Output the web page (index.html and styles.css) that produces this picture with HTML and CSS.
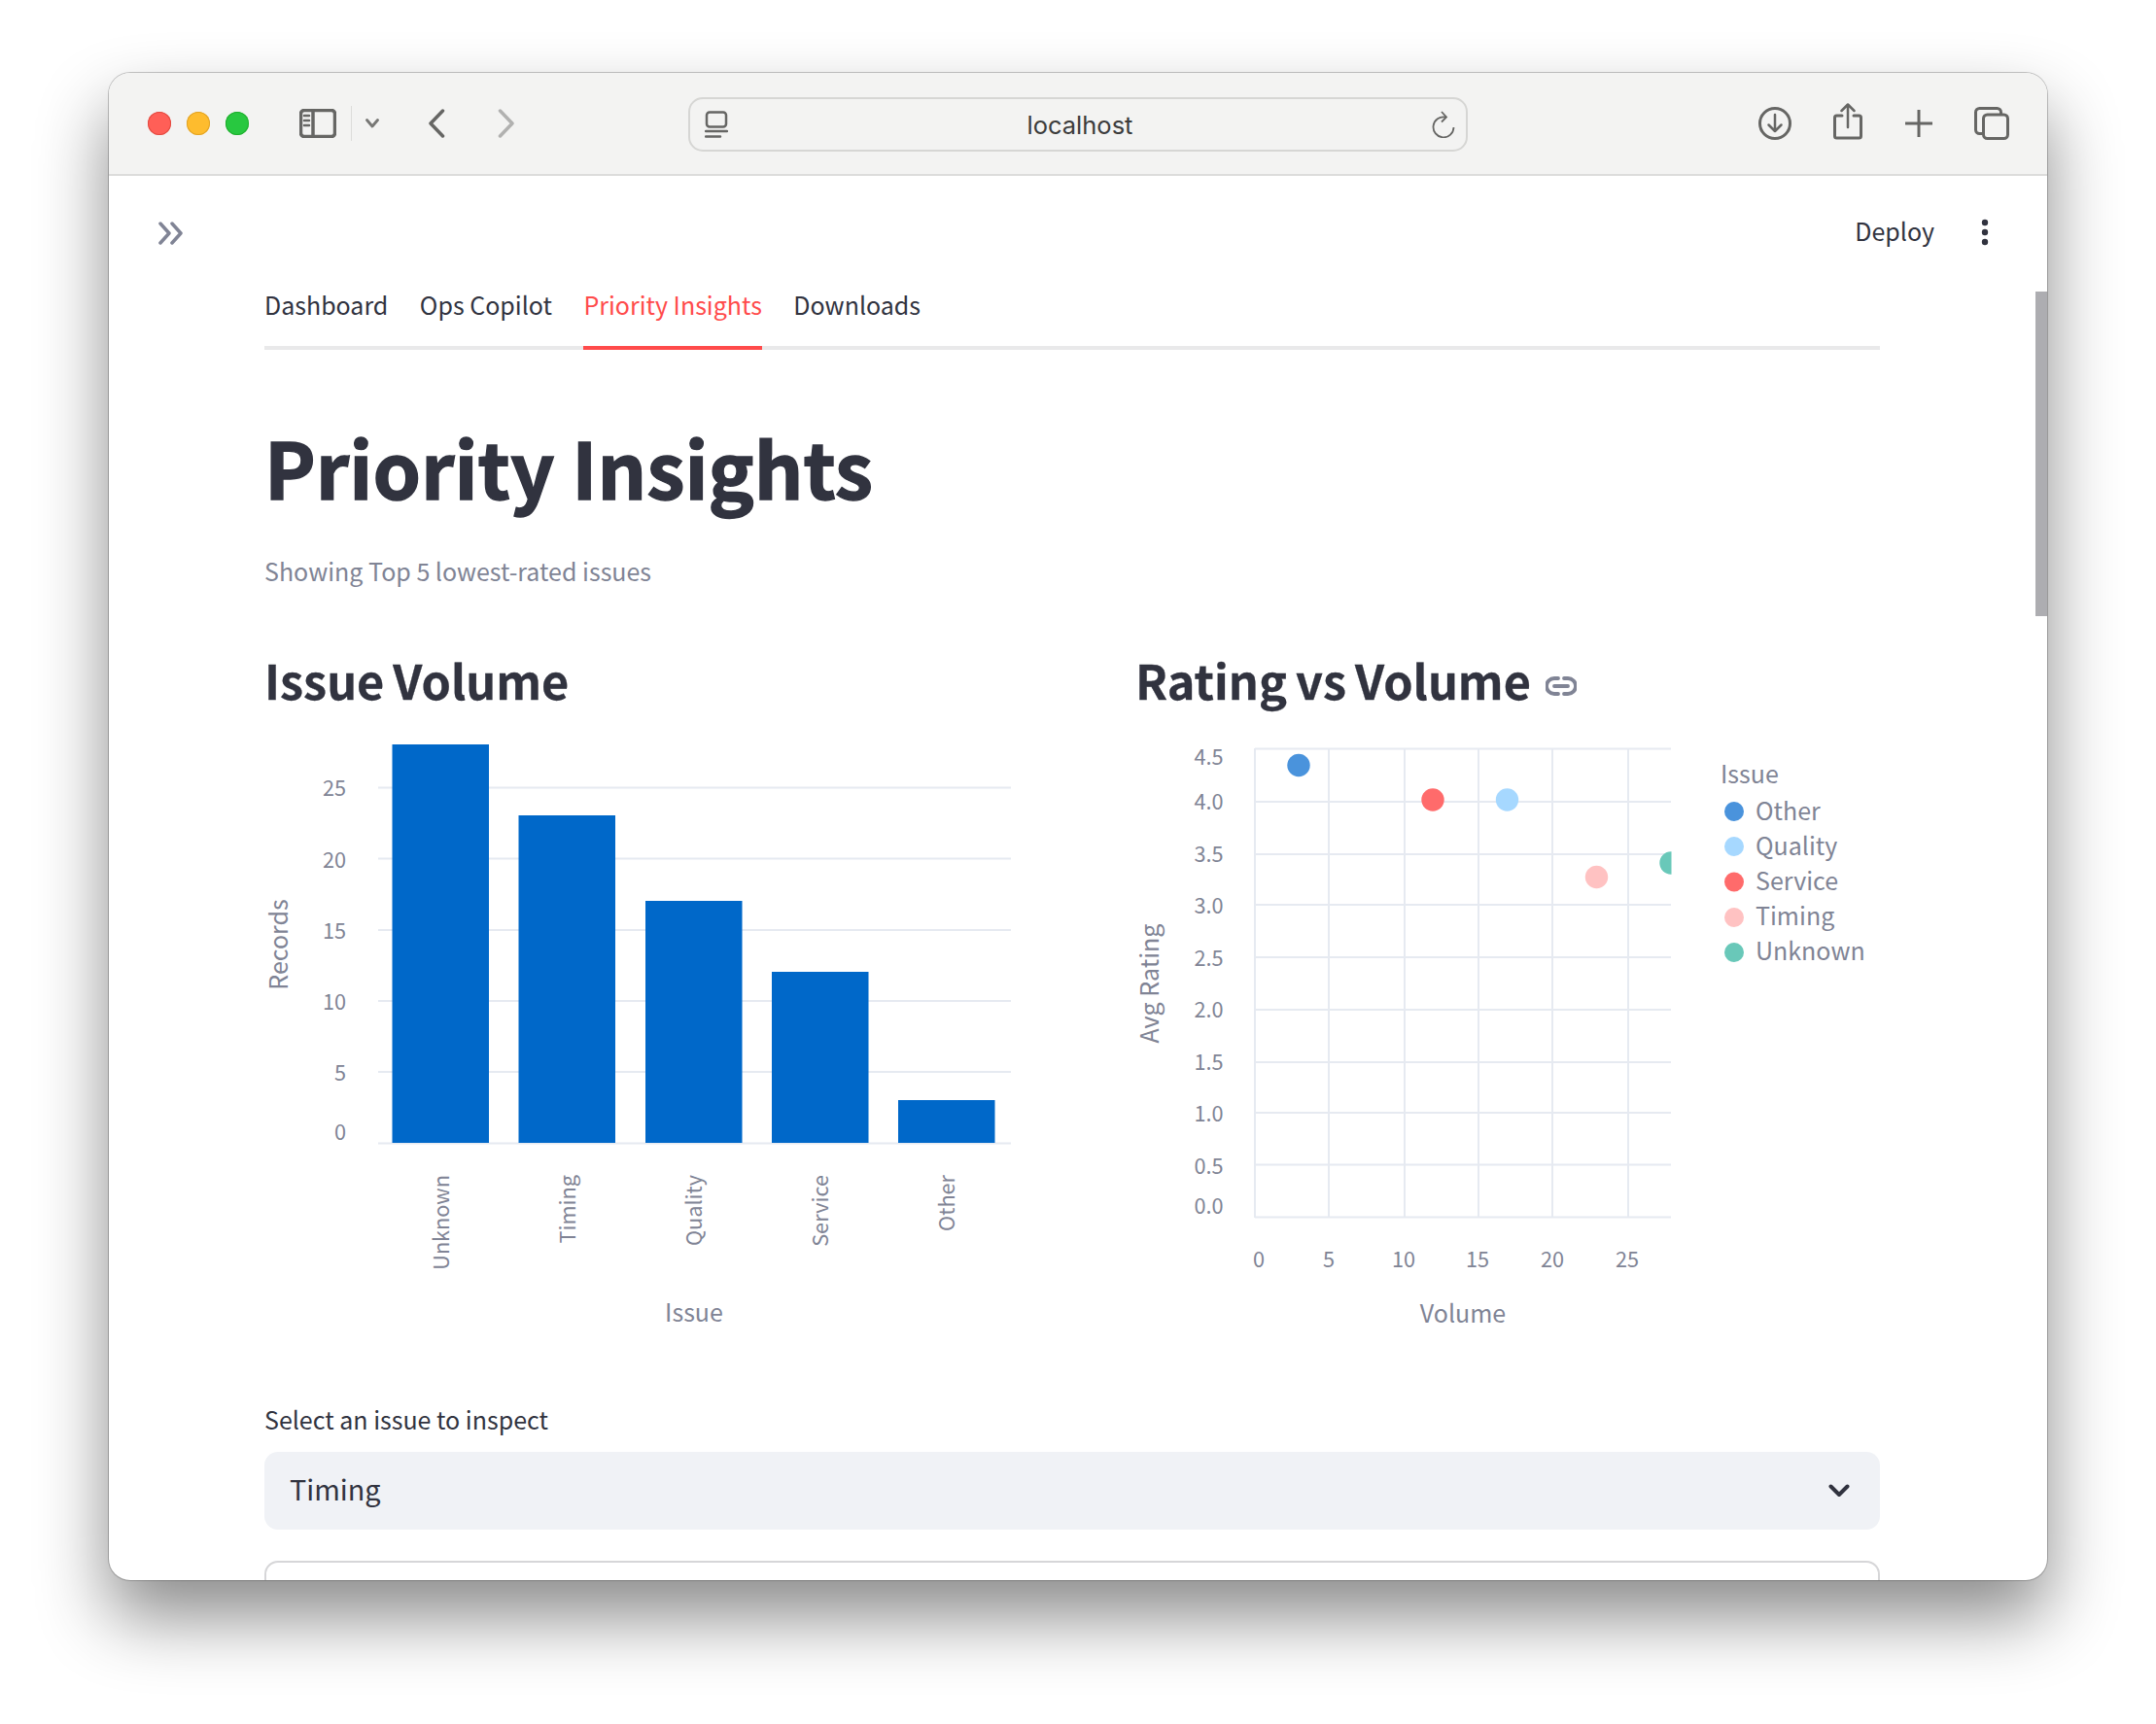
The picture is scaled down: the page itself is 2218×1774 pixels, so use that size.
FILE: index.html
```html
<!DOCTYPE html>
<html lang="en">
<head>
<meta charset="utf-8">
<title>Priority Insights</title>
<link rel="stylesheet" href="styles.css">
</head>
<body>
<div class="window">
  <header class="toolbar">
    <div class="tool-left">
      <div class="lights"><span class="light red"></span><span class="light yellow"></span><span class="light green"></span></div>
      <svg class="ic-sidebar" width="38" height="30" viewBox="0 0 38 30"><rect x="1.5" y="1.5" width="35" height="27" rx="3.5" class="st3"/><path d="M14 2v26" class="st3"/><path d="M5 7h5M5 12h5M5 17h5" class="st2"/></svg>
      <span class="tool-divider"></span>
      <svg class="ic-caret" width="14" height="10" viewBox="0 0 14 10"><path d="M1.500 1.500L7 8l5.500-6.500" class="st2b"/></svg>
      <svg class="ic-back" width="18" height="30" viewBox="0 0 18 30"><path d="M15.5 2L3 15l12.5 13" class="st3"/></svg>
      <svg class="ic-forward" width="18" height="30" viewBox="0 0 18 30"><path d="M2.500 2L15 15 2.500 28" class="st3 faded"/></svg>
    </div>
    <div class="urlbar">
      <svg class="ic-site" width="24" height="28" viewBox="0 0 24 28"><rect x="2" y="1.500" width="20" height="15" rx="3" class="st2"/><path d="M1 21h22" class="st2"/><path d="M1 26.500h15" class="st2"/></svg>
      <span class="url-text">localhost</span>
      <svg class="ic-reload" width="24" height="28" viewBox="0 0 24 28"><path d="M14 6.500A10.500 10.500 0 1 0 22.500 17" class="st15"/><path d="M10 1l5 5.500-5 5" class="st15"/></svg>
    </div>
    <div class="tool-right">
      <svg class="ic-download" width="34" height="34" viewBox="0 0 34 34"><circle cx="17" cy="17" r="15.500" class="st25"/><path d="M17 8v17M10.500 18.500L17 25l6.500-6.500" class="st2"/></svg>
      <svg class="ic-share" width="30" height="38" viewBox="0 0 30 38"><path d="M9 13H3.500a2 2 0 0 0-2 2v19a2 2 0 0 0 2 2h23a2 2 0 0 0 2-2V15a2 2 0 0 0-2-2H21" class="st25"/><path d="M15 25V2M8.500 8L15 1.500 21.500 8" class="st2"/></svg>
      <svg class="ic-plus" width="28" height="28" viewBox="0 0 28 28"><path d="M14 0v28M0 14h28" class="st25"/></svg>
      <svg class="ic-tabs" width="36" height="34" viewBox="0 0 36 34"><rect x="1.500" y="1.500" width="26" height="26" rx="4" class="st25"/><rect x="9.500" y="8" width="25" height="24.500" rx="4" class="st25 filled"/></svg>
    </div>
  </header>

  <main class="page">
    <svg class="scrollbar" aria-hidden="true"></svg>
    <div class="app-head">
      <svg class="ic-expand" width="28" height="24" viewBox="0 0 28 24"><path d="M3 2l9 10-9 10M15 2l9 10-9 10" class="st-expand"/></svg>
      <div class="app-actions">
        <span class="deploy">Deploy</span>
        <svg class="ic-more" width="8" height="28" viewBox="0 0 8 28"><circle cx="4" cy="4" r="3.200"/><circle cx="4" cy="14" r="3.200"/><circle cx="4" cy="24" r="3.200"/></svg>
      </div>
    </div>

    <div class="content">
      <nav class="tabs">
        <span class="tab">Dashboard</span>
        <span class="tab">Ops Copilot</span>
        <span class="tab active">Priority Insights</span>
        <span class="tab">Downloads</span>
      </nav>

      <h1 class="title">Priority Insights</h1>
      <p class="caption">Showing Top 5 lowest-rated issues</p>

      <div class="columns">
        <section class="col-left">
          <h2 class="heading">Issue Volume</h2>
          <svg class="chart" width="800" height="640" viewBox="272 740 800 640">
            <g class="grid">
              <path d="M389 810.500H1040M389 883.500H1040M389 957H1040M389 1030H1040M389 1103H1040M389 1176.500H1040"/>
            </g>
            <g class="bars">
              <rect x="403.500" y="766" width="99.500" height="410"/>
              <rect x="533.500" y="839" width="99.500" height="337"/>
              <rect x="664" y="927" width="99.500" height="249"/>
              <rect x="794" y="1000" width="99.500" height="176"/>
              <rect x="924" y="1132" width="99.500" height="44"/>
            </g>
            <g class="tick end">
              <text x="356" y="819">25</text>
              <text x="356" y="893">20</text>
              <text x="356" y="966">15</text>
              <text x="356" y="1039">10</text>
              <text x="356" y="1112">5</text>
              <text x="356" y="1173">0</text>
            </g>
            <g class="tick end">
              <text transform="translate(461.500 1209) rotate(-90)">Unknown</text>
              <text transform="translate(592 1209) rotate(-90)">Timing</text>
              <text transform="translate(722 1209) rotate(-90)">Quality</text>
              <text transform="translate(852 1209) rotate(-90)">Service</text>
              <text transform="translate(982 1209) rotate(-90)">Other</text>
            </g>
            <text class="axis middle" transform="translate(296 972) rotate(-90)">Records</text>
            <text class="axis middle" x="714" y="1360">Issue</text>
          </svg>
        </section>

        <section class="col-right">
          <h2 class="heading">Rating vs Volume <svg class="ic-link" width="32" height="20" viewBox="0 0 32 20"><path d="M13 2H9a8 8 0 0 0 0 16h4M19 2h4a8 8 0 0 1 0 16h-4M9 10h14" class="st-link"/></svg></h2>
          <svg class="chart" width="766" height="640" viewBox="1168 740 766 640">
            <defs><clipPath id="plot"><rect x="1291" y="770" width="428.500" height="483"/></clipPath></defs>
            <g class="grid">
              <path d="M1291 770.500H1719M1291 825H1719M1291 879H1719M1291 931H1719M1291 985H1719M1291 1039H1719M1291 1093H1719M1291 1145H1719M1291 1198.500H1719M1291 1252.500H1719"/>
              <path d="M1291 770V1253M1367 770V1253M1445 770V1253M1521 770V1253M1597 770V1253M1675 770V1253"/>
            </g>
            <g clip-path="url(#plot)">
              <circle class="p-other" cx="1336" cy="787.500" r="11.700"/>
              <circle class="p-service" cx="1474" cy="823" r="11.700"/>
              <circle class="p-quality" cx="1550.500" cy="823" r="11.700"/>
              <circle class="p-timing" cx="1642.500" cy="902.500" r="11.700"/>
              <circle class="p-unknown" cx="1719" cy="888" r="11.700"/>
            </g>
            <g class="tick end">
              <text x="1258.500" y="787">4.5</text>
              <text x="1258.500" y="832.500">4.0</text>
              <text x="1258.500" y="887">3.5</text>
              <text x="1258.500" y="940">3.0</text>
              <text x="1258.500" y="994">2.5</text>
              <text x="1258.500" y="1047">2.0</text>
              <text x="1258.500" y="1101">1.5</text>
              <text x="1258.500" y="1154">1.0</text>
              <text x="1258.500" y="1208">0.5</text>
              <text x="1258.500" y="1248.500">0.0</text>
            </g>
            <g class="tick middle">
              <text x="1295" y="1304">0</text>
              <text x="1367" y="1304">5</text>
              <text x="1444" y="1304">10</text>
              <text x="1520" y="1304">15</text>
              <text x="1597" y="1304">20</text>
              <text x="1674" y="1304">25</text>
            </g>
            <text class="axis middle" transform="translate(1192 1012) rotate(-90)">Avg Rating</text>
            <text class="axis middle" x="1505" y="1361">Volume</text>
            <text class="axis" x="1770" y="806">Issue</text>
            <g class="legend">
              <circle class="p-other" cx="1784" cy="835" r="10"/><text x="1806" y="844">Other</text>
              <circle class="p-quality" cx="1784" cy="871" r="10"/><text x="1806" y="880">Quality</text>
              <circle class="p-service" cx="1784" cy="907.500" r="10"/><text x="1806" y="916">Service</text>
              <circle class="p-timing" cx="1784" cy="944" r="10"/><text x="1806" y="952">Timing</text>
              <circle class="p-unknown" cx="1784" cy="980" r="10"/><text x="1806" y="988">Unknown</text>
            </g>
          </svg>
        </section>
      </div>

      <div class="field-label">Select an issue to inspect</div>
      <div class="select">
        <span class="select-value">Timing</span>
        <svg class="ic-chevron" width="22" height="14" viewBox="0 0 22 14"><path d="M2.500 2.500L11 11l8.500-8.500" class="st-chevron"/></svg>
      </div>
      <div class="next-card"></div>
    </div>
  </main>
</div>
</body>
</html>
```

FILE: styles.css
```css
* { box-sizing: border-box; }
html, body { margin: 0; padding: 0; background: #fff; }
body {
  width: 2218px;
  height: 1774px;
  padding: 75px 112px 0;
  overflow: hidden;
  font-family: "Noto Sans CJK SC", "Noto Sans", sans-serif;
  color: #31333f;
}
svg { display: block; flex: none; fill: none; }

.window {
  width: 1994px;
  height: 1551px;
  border-radius: 22px;
  overflow: hidden;
  background: #fff;
  box-shadow: 0 0 0 1px rgba(0, 0, 0, .22), 0 38px 72px rgba(0, 0, 0, .46);
}

/* browser toolbar */
.toolbar {
  height: 106px;
  display: flex;
  align-items: center;
  background: #f3f3f2;
  border-bottom: 2px solid #dcdcdb;
}
.st2, .st2b, .st3, .st15, .st25 { stroke: #666664; fill: none; }
.st15 { stroke-width: 1.8; }
.st2 { stroke-width: 2.500; stroke-linecap: round; stroke-linejoin: round; }
.st2b { stroke-width: 2.800; stroke: #777775; stroke-linecap: round; stroke-linejoin: round; }
.st25 { stroke-width: 3; stroke-linecap: round; }
.st3 { stroke-width: 3.500; stroke-linecap: round; stroke-linejoin: round; }
.faded { stroke: #b1b1b0; }
.filled { fill: #f3f3f2; }

.tool-left { width: 596px; padding-left: 40px; display: flex; align-items: center; }
.lights { display: flex; gap: 16px; }
.light { width: 24px; height: 24px; border-radius: 50%; }
.red { background: #ff5f57; box-shadow: inset 0 0 0 1px #e24b41; }
.yellow { background: #febc2e; box-shadow: inset 0 0 0 1px #e1a325; }
.green { background: #28c840; box-shadow: inset 0 0 0 1px #1fad2d; }
.ic-sidebar { margin-left: 52px; }
.tool-divider { width: 1px; height: 36px; margin-left: 15px; background: #dcdcda; }
.ic-caret { margin-left: 14px; }
.ic-back { margin-left: 50px; }
.ic-forward { margin-left: 54px; }

.urlbar {
  width: 802px;
  height: 56px;
  margin-top: 1px;
  display: flex;
  align-items: center;
  justify-content: space-between;
  padding: 0 11px 0 15px;
  border: 2px solid #d6d6d4;
  border-radius: 15px;
}
.url-text { padding-top: 1px; font-family: "Inter", "Noto Sans", sans-serif; font-size: 25.500px; color: #3c3c3c; }

.tool-right { display: flex; align-items: center; padding-left: 299px; }
.ic-share { margin-left: 43px; margin-top: -4px; }
.ic-plus { margin-left: 44px; }
.ic-tabs { margin-left: 43px; }

/* streamlit page */
.page { position: relative; height: 1445px; overflow: hidden; }
.scrollbar { position: absolute; right: 0; top: 119px; width: 12px; height: 334px; background: #adadb1; }
.app-head {
  height: 76px;
  padding: 40px 50px 0;
  display: flex;
  align-items: center;
  justify-content: space-between;
}
.ic-expand { margin-top: 2px; }
.st-expand { stroke: #808495; stroke-width: 3.500; stroke-linecap: round; stroke-linejoin: round; }
.app-actions { display: flex; align-items: center; gap: 48px; padding-right: 10px; }
.deploy { padding-bottom: 4px; font-size: 25px; line-height: 36px; }
.ic-more { fill: #31333f; }

.content { margin: 15px 172px 0 160px; }
.tabs { display: flex; gap: 32.500px; border-bottom: 4px solid #e9e9ea; }
.tab { padding: 23px 0 25px; margin-bottom: -4px; border-bottom: 4px solid transparent; font-size: 25px; line-height: 36px; }
.tab.active { color: #ff4b4b; border-bottom-color: #ff4b4b; }

.title { margin: 70px 0 0; font-size: 79.200px; line-height: 100px; font-weight: 700; -webkit-text-stroke: 1.400px #31333f; }
.caption { margin: 37px 0 0; font-size: 25px; line-height: 40px; color: #808495; }

.columns { display: flex; gap: 96px; margin-top: 57px; }
.col-left { width: 800px; }
.col-right { width: 766px; }
.heading { margin: 0 0 6px; font-size: 48.600px; line-height: 70px; font-weight: 600; word-spacing: -2px; -webkit-text-stroke: .3px #31333f; display: flex; align-items: center; gap: 15px; }
.ic-link { margin-top: 13px; }
.st-link { stroke: #808495; stroke-width: 3.800; stroke-linecap: round; }

.chart { overflow: visible; }
.grid path { stroke: #e6eaf1; stroke-width: 2; }
.bars rect { fill: #0068c9; }
.chart text { font-family: "Noto Sans CJK SC", "Noto Sans", sans-serif; fill: #808495; }
.tick text { font-size: 21.700px; }
.axis { font-size: 25px; }
.legend text { font-size: 25px; }
.end text { text-anchor: end; }
.middle, .middle text { text-anchor: middle; }
.p-other { fill: #4a93dc; }
.p-quality { fill: #a6d8ff; }
.p-service { fill: #ff6b6b; }
.p-timing { fill: #ffc2c2; }
.p-unknown { fill: #69c8b9; }

.field-label { margin-top: 60px; font-size: 25px; line-height: 40px; }
.select {
  height: 80px;
  margin-top: 14px;
  padding: 0 18px 0 26px;
  display: flex;
  align-items: center;
  justify-content: space-between;
  border-radius: 14px;
  background: #f0f2f6;
  font-size: 28.800px;
}
.select-value { padding-bottom: 5px; }
.ic-chevron { margin-right: 13px; }
.st-chevron { stroke: #31333f; stroke-width: 4; stroke-linecap: round; stroke-linejoin: round; }
.next-card { height: 60px; margin-top: 32px; border: 2px solid #d6d6d8; border-radius: 14px; }
```
